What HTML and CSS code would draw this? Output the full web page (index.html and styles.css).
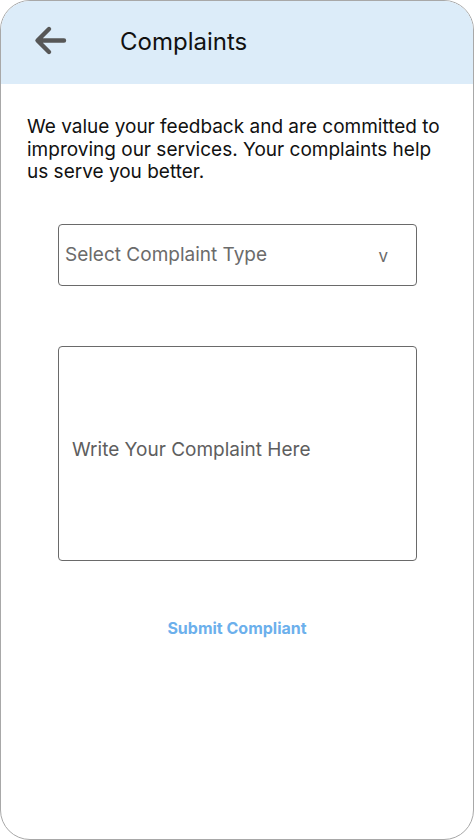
FILE: index.html
```html
<!DOCTYPE html>
<html>
<head>
<meta charset="utf-8">
<link rel="stylesheet" href="styles.css">
</head>
<body>
<div class="phone">
  <header class="header">
    <svg class="back" width="34" height="32" viewBox="0 0 34 32">
      <path d="M31 15.5 H5 M16 4 L4.5 15.5 L16 27" fill="none" stroke="#575757" stroke-width="4.4" stroke-linecap="round" stroke-linejoin="round"/>
    </svg>
    <h1 class="title">Complaints</h1>
  </header>
  <main class="content">
    <p class="intro">We value your feedback and are committed to improving our services. Your complaints help us serve you better.</p>
    <div class="select">
      <span class="select-label">Select Complaint Type</span>
      <span class="chev">v</span>
    </div>
    <div class="textarea">
      <span class="ta-label">Write Your Complaint Here</span>
    </div>
    <div class="submit">Submit Compliant</div>
  </main>
</div>
</body>
</html>
```
FILE: styles.css
```css
* { box-sizing: border-box; }
html, body { margin: 0; padding: 0; background: #fff; }
body { font-family: Inter, "Noto Sans", sans-serif; }
.phone {
  width: 474px;
  height: 840px;
  border: 1px solid #a8a8a8;
  border-radius: 30px;
  overflow: hidden;
  background: #fff;
}
.header {
  height: 83px;
  background: #dcecf9;
  display: flex;
  align-items: center;
  padding: 0 0 2px 32px;
}
.back { display: block; margin-top: -1px; }
.title {
  margin: 0 0 0 53px;
  font-size: 24px;
  font-weight: 400;
  color: #111;
}
.content {
  padding: 32px 20px 0 26px;
  display: flex;
  flex-direction: column;
}
.intro {
  margin: 0;
  font-size: 19px;
  line-height: 22.6px;
  color: #111;
}
.select {
  margin: 40px 0 0 31px;
  width: 359px;
  height: 62px;
  border: 1px solid #6a6a6a;
  border-radius: 4px;
  display: flex;
  align-items: center;
  justify-content: space-between;
  padding: 0 28px 0 6px;
  color: #6b6b6b;
}
.select-label { font-size: 19px; }
.chev { font-size: 17px; margin-top: 2px; }
.textarea {
  margin: 60px 0 0 31px;
  width: 359px;
  height: 215px;
  border: 1px solid #6a6a6a;
  border-radius: 4px;
  display: flex;
  align-items: center;
  padding: 0 13px;
}
.ta-label { font-size: 19px; color: #5e5e5e; margin-bottom: 7px; }
.submit {
  margin: 57px 0 0 0;
  align-self: center;
  font-size: 16px;
  font-weight: 700;
  color: #6cb0ec;
  transform: translateX(-3px);
}
```
